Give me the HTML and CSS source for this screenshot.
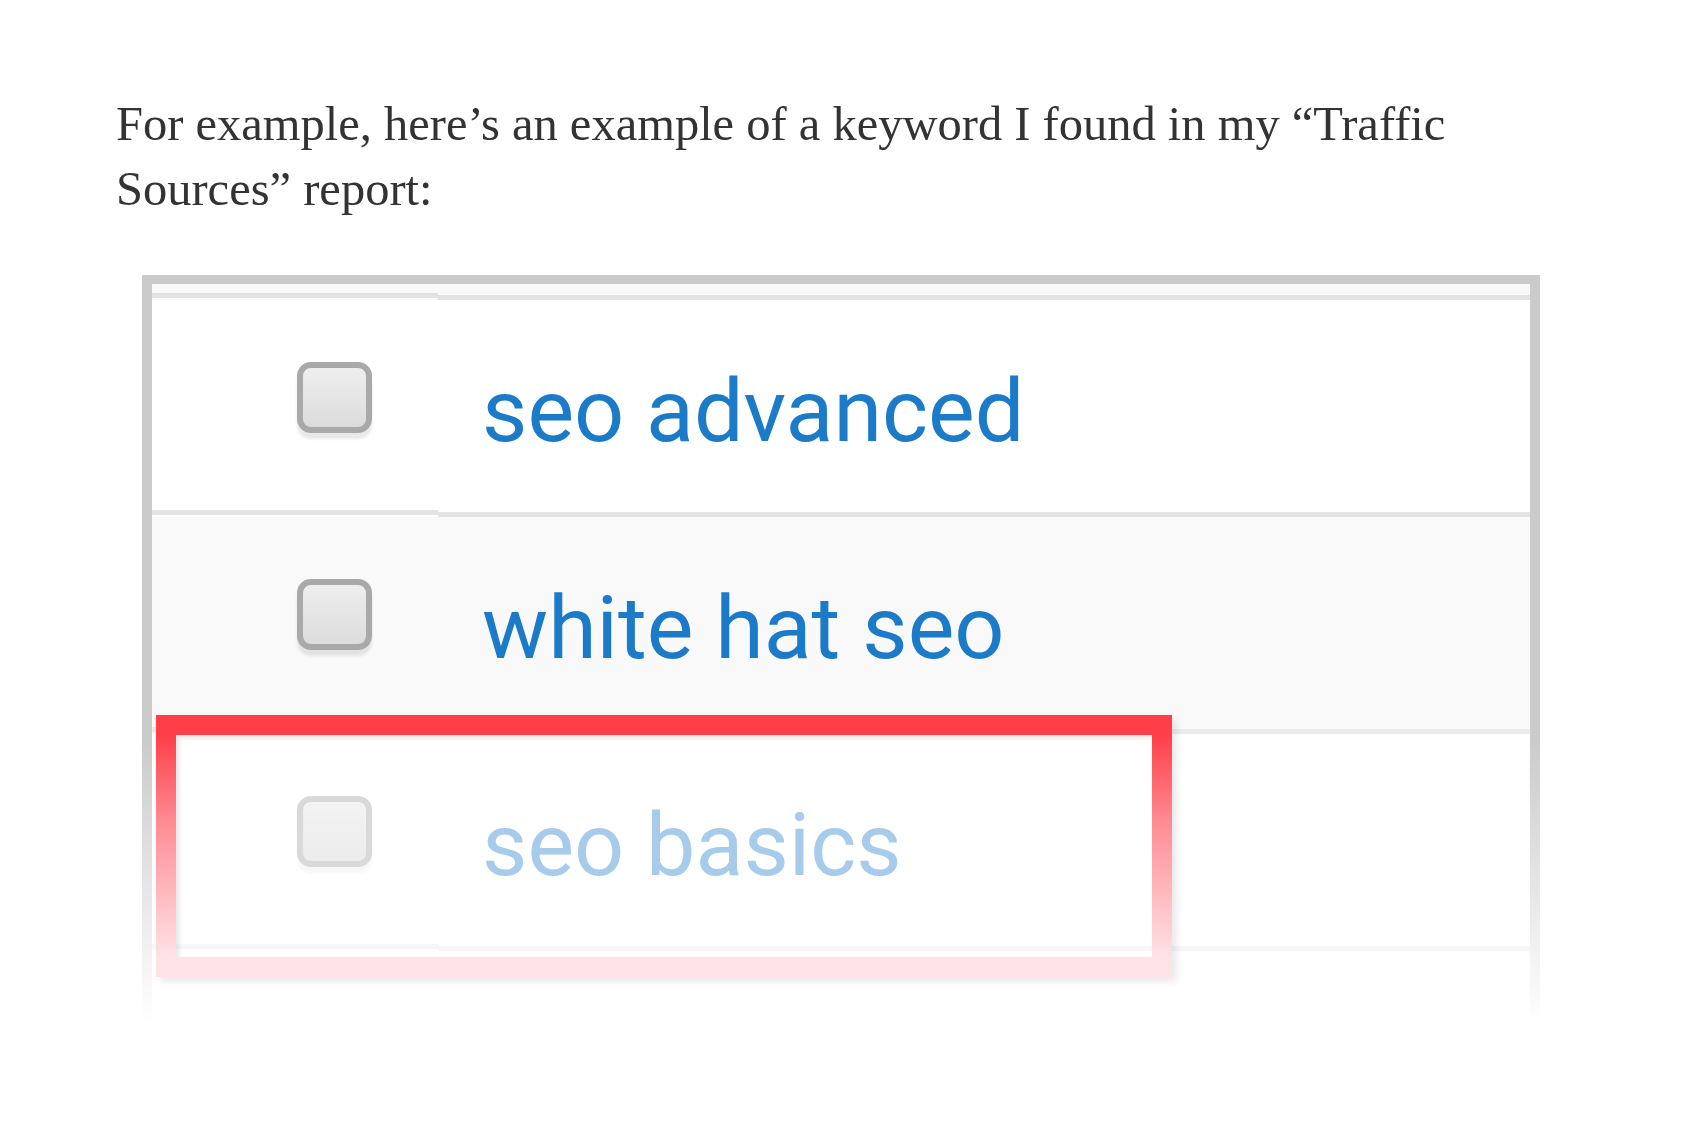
FILE: index.html
```html
<!DOCTYPE html>
<html lang="en">
<head>
<meta charset="utf-8">
<title>Traffic Sources keyword example</title>
<link rel="stylesheet" href="styles.css">
</head>
<body>
<main class="article">
  <p class="lead">For example, here’s an example of a keyword I found in my “Traffic Sources” report:</p>
  <figure class="shot">
    <div class="table">
      <div class="strip"><div class="c-left"></div><div class="c-right"></div></div>
      <div class="row">
        <div class="c-left"><span class="checkbox"></span></div>
        <div class="c-right"><span class="kw">seo advanced</span></div>
      </div>
      <div class="row row-alt">
        <div class="c-left"><span class="checkbox"></span></div>
        <div class="c-right"><span class="kw">white hat seo</span></div>
      </div>
      <div class="row row-muted">
        <div class="c-left"><span class="checkbox"></span></div>
        <div class="c-right"><span class="kw">seo basics</span></div>
      </div>
    </div>
    <div class="highlight"></div>
  </figure>
</main>
</body>
</html>
```
FILE: styles.css
```css
html, body {
  margin: 0;
  padding: 0;
  background: #ffffff;
}

.article {
  padding: 91px 0 0 116px;
}

.lead {
  margin: 0;
  width: 1400px;
  font-family: "Liberation Serif", "DejaVu Serif", serif;
  font-size: 48.5px;
  line-height: 65px;
  color: #333333;
}

.shot {
  position: relative;
  margin: 54px 0 0 26px;
  width: 1398px;
  height: 747px;
  box-sizing: border-box;
  border-style: solid;
  border-width: 9px 10px 0 10px;
  border-image: linear-gradient(to bottom, #cbcbcb 0%, #cbcbcb 62%, rgba(255, 255, 255, 0) 100%) 1;
}

.table {
  display: flex;
  flex-direction: column;
}

.strip,
.row {
  display: grid;
  grid-template-columns: 286px 1fr;
}

.strip {
  background: #f9f9f9;
  height: 16px;
}

.strip .c-left {
  border-bottom: 5px solid #e3e3e3;
  margin-bottom: 2px;
}

.strip .c-right {
  border-bottom: 5px solid #e3e3e3;
}

.row {
  height: 217px;
  background: #ffffff;
}

.row .c-left {
  border-bottom: 5px solid #e3e3e3;
  margin-bottom: 2px;
  padding: 62px 0 0 145px;
}

.row .c-right {
  border-bottom: 5px solid #e3e3e3;
  padding: 66px 0 0 44px;
}

.row-alt {
  background: #f9f9f9;
}

.row-alt .c-left,
.row-alt .c-right {
  border-bottom-color: #ebebeb;
}

.row-muted .c-left,
.row-muted .c-right {
  border-bottom-color: #f7f7f7;
}

.checkbox {
  display: block;
  width: 75px;
  height: 71px;
  box-sizing: border-box;
  border: 6px solid #a9a9a9;
  border-radius: 14px;
  background: linear-gradient(to bottom, #eeeeee, #dcdcdc);
  box-shadow: 0 6px 3px rgba(0, 0, 0, 0.09);
}

.kw {
  display: block;
  font-family: Roboto, "Liberation Sans", sans-serif;
  font-size: 88px;
  line-height: 89px;
  color: #1b7bc8;
  white-space: nowrap;
}

.row-muted .checkbox {
  border-color: #d9d9d9;
  background: linear-gradient(to bottom, #f3f3f3, #ececec);
  box-shadow: 0 6px 3px rgba(0, 0, 0, 0.035);
}

.row-muted .kw {
  color: #a6cbeb;
}

.highlight {
  position: absolute;
  left: 4px;
  top: 431px;
  width: 1016px;
  height: 262px;
  box-sizing: border-box;
  border-style: solid;
  border-width: 20px;
  border-image: linear-gradient(to bottom, #ff3e48 0%, #ff8c94 40%, #ffe3e6 100%) 1;
  box-shadow: 4px 4px 8px rgba(0, 0, 0, 0.10), inset 3px 3px 5px rgba(0, 0, 0, 0.10);
}
```
